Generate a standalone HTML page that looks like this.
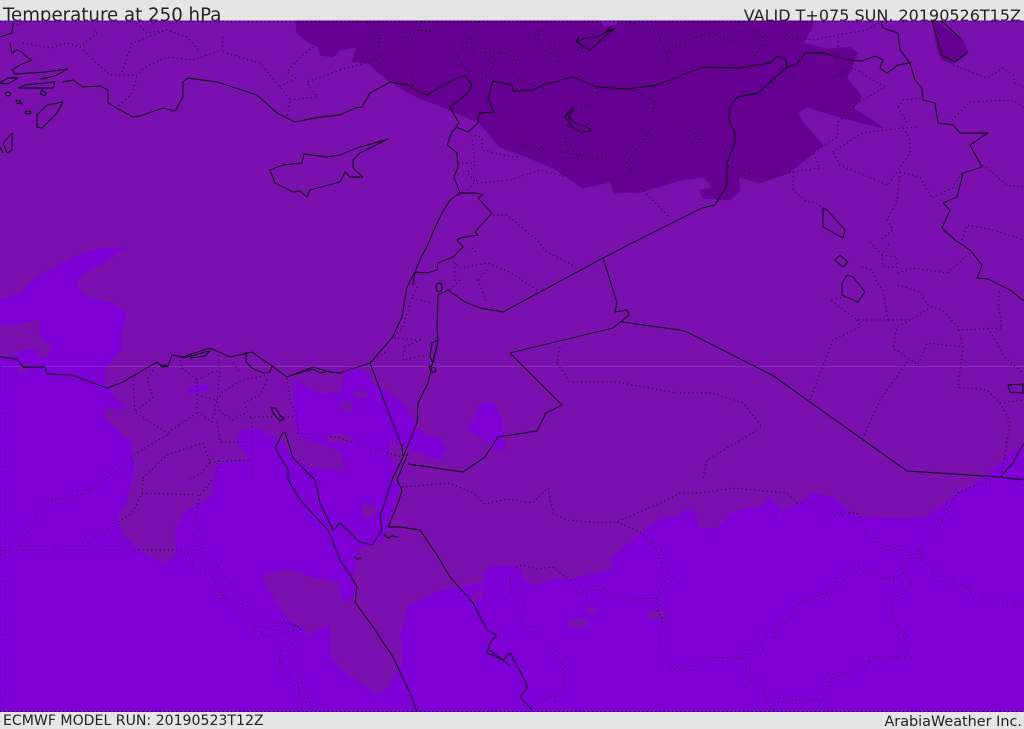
<!DOCTYPE html>
<html><head><meta charset="utf-8"><title>Temperature at 250 hPa</title>
<style>
html,body{margin:0;padding:0;background:#e5e5e5}
svg{display:block}
text{font-family:"DejaVu Sans","Liberation Sans",sans-serif;fill:#222}
</style></head><body>
<svg width="1024" height="729" viewBox="0 0 1024 729" xmlns="http://www.w3.org/2000/svg">
<rect width="1024" height="729" fill="#e5e5e5"/>
<text x="3" y="21" font-size="18.2">Temperature at 250 hPa</text>
<text x="1021" y="21" font-size="16" text-anchor="end">VALID T+075 SUN, 20190526T15Z</text>
<text x="3" y="725" font-size="14.1">ECMWF MODEL RUN: 20190523T12Z</text>
<text x="1022" y="726" font-size="14.4" text-anchor="end">ArabiaWeather Inc.</text>
<rect x="0" y="21" width="1024" height="691" fill="#7f00d7"/>
<!-- mid temperature band -->
<g fill="#7a11ae" stroke="#7a11ae" stroke-linejoin="round" stroke-width="1">
<path d="M0 298Q12 296 20 292L33 278L63 262Q80 251 100 248L127 247L110 260L87 273Q76 281 78 287L88 297L113 303Q125 309 128 318L123 330L123 348L107 367L104 377L113 395L125 405L120 410L107 407L104 415L113 425L132 443L135 470L132 480L127 503L118 517Q120 528 125 535L143 552L162 562L175 557L175 527L187 510L212 495L212 480L217 463L250 460L235 442L243 428L260 428L280 440L290 453L308 467L333 468L345 473L340 452L320 445L300 438L293 420L293 378L320 393L340 392L345 367L353 367L368 372L373 382L385 390L400 400L412 417L420 430L427 435L440 437L448 448L440 460L430 458L407 448L390 442L390 457L397 467L390 480L400 480L400 490L388 527L383 543L360 548L357 563L353 577L357 595L345 603L340 593L338 583L313 578L287 569L263 577L270 590L287 617L310 634L330 623L332 657L340 667L353 678L377 693L387 688L402 662L400 633L408 605L440 590L478 583L483 587L483 570L493 565L520 565L523 578L537 585L553 578L573 578L613 568L610 558L640 533L660 518L680 515L687 508L695 512L700 528L717 528L730 513L747 508L763 505L768 497L777 502L783 509L795 505L813 492L833 497L857 515L900 518L927 515L957 493L983 478L1007 455L1024 443L1024 21L0 21Z"/>
<path d="M0 326L20 325L40 320L39 330L40 337L52 347L48 354L40 357L37 348L20 350L10 358L0 356Z"/>
<path d="M18 371L22 365L29 363L26 370L20 375Z"/>
<path d="M362 503L377 508L375 514L368 519L364 515Z"/>
<path d="M353 394Q361 388 366 393L369 397L357 397Z"/>
<ellipse cx="347" cy="406" rx="6" ry="5"/>
<path d="M327 436L340 434L355 438L345 443L328 440Z"/>
<path d="M473 596L480 590L482 596L476 601L471 601Z"/>
<ellipse cx="592" cy="610" rx="4" ry="4"/>
<ellipse cx="578" cy="623" rx="11" ry="4"/>
<ellipse cx="657" cy="615" rx="9" ry="4"/>
<rect x="778" y="515" width="2" height="3"/>
</g>
<!-- warm pockets inside mid band -->
<g fill="#7f00d7" stroke="#7f00d7">
<path d="M187 390L195 386L208 385L206 391L192 394Z"/>
<path d="M482 403L493 402L500 417L503 430L505 448L497 451L487 440L468 430L475 417Z"/>
</g>
<!-- cold patches -->
<g fill="#660093" stroke="#660093" stroke-linejoin="round">
<path d="M296 21L297 33L310 43L318 47L320 55L333 57L340 50L357 47L352 62L368 63L390 82L417 97L450 110L480 123L500 147L530 158L553 168L583 188L610 182L615 193L640 192L680 180L703 177L713 188L700 190L703 198L730 200L740 190L738 177L760 183L790 172L823 145L803 123L798 113L807 107L840 117L883 128L853 108L862 97L847 78L858 53L850 47L827 49L803 43L812 27L813 21Z"/>
<path d="M932 21L937 47L942 60L953 63L968 52L962 40L943 27L942 21Z"/>
</g>
<path d="M600 21L604 26L616 25L618 21Z M900 21L904 25L910 24L911 21Z" fill="#7a11ae"/>
<!-- faint seam -->
<rect x="0" y="366" width="1024" height="1" fill="#fff" opacity=".13"/>
<!-- dotted boundaries -->
<path fill="none" stroke="#000" stroke-width=".9" stroke-dasharray="1 3.2" d="
M23 43L50 48L67 43L80 47L97 33L92 27
M80 47L93 60L110 75L137 75L145 67L167 57L193 60L222 50L223 37
M122 72L132 43L167 30L187 37L200 52
M137 77L132 93L117 108
M223 52L260 63L280 87L290 100L287 118
M280 87L295 78L287 72L300 57L313 47
M290 100L317 97L307 82L340 70
M137 23L147 33L167 30
M13 25L30 22
M340 70L365 63L383 55L400 50L412 70L413 85
M367 22L380 37L378 45L383 55
M400 50L402 38L420 30L440 33L442 22
M422 22L420 30
M478 22L478 33L458 50L457 57L467 70L488 75
M472 43L473 52L500 53L517 57L543 50L557 55L557 63L565 78
M500 53L493 65L488 75
M557 55L583 48L533 38L547 25
M507 72L537 88
M597 88L597 100L585 108L573 108
M567 133L565 143L578 155
M500 107L503 125L517 135L522 147L517 157
M522 147L547 150L578 155L627 162L648 135L655 102L633 90
M655 102L680 122
M578 155L578 165L565 177L540 170L510 180L477 183L467 173L475 165L472 137
M475 135L482 138L482 150L513 157
M458 163L473 163
M477 180L467 190
M627 162L640 187L670 218
M493 215L507 215L537 240L547 252L578 268
M658 33L673 72 M665 53L680 43 M630 22L658 33
M680 42L713 33L738 45L763 37L797 37L813 40L837 35L867 30L880 22
M718 33L722 23 M738 22L763 37 M763 45L753 57
M838 37L838 55
M787 68L797 80L812 87L837 75L853 68L885 87L858 103L838 122L837 137L813 152L820 168L793 172L770 177L727 166
M683 125L703 143L733 145
M793 172L793 190L807 202L815 202L823 208
M833 152L862 133L903 128L918 127
M903 128L910 140L910 153L888 185L840 165L833 152
M900 172L920 177L932 198L952 188L963 172
M900 172L897 200L887 220L893 230L880 240
M898 107L903 100L922 98 M898 107L907 123
M952 120L970 102L1013 100L1023 107
M953 65L987 78L1003 68L1013 75L1015 83L1023 87
M980 162L1007 185L1023 187
M962 240L967 225L993 230L1024 240
M870 242L882 255L890 242
M882 255L883 267L897 267L897 257L882 255
M862 267L872 270L877 283L883 290L888 320L857 320L830 300L847 297
M898 273L913 268L947 273L970 253
M898 285L920 292L928 305L942 310L958 327L963 347L958 387L987 390L1000 403L1010 422L1002 473
M888 320L910 320L930 308
M910 320L897 327L893 348L918 365L927 343L963 347
M907 362L880 400L862 440
M857 320L860 327L833 340L810 400
M958 330L1002 328L998 303L1000 290
M988 328L1005 357L1023 373
M1000 403L1023 400
M680 393L712 393L743 403L762 427L707 460L703 478
M560 347L557 363L570 382L617 382L677 393
M537 290L510 272L487 263L460 268L452 260
M478 280L487 270 M478 280L487 303
M460 280L450 290 M455 263L455 283
M472 248L477 253
M417 287L412 298L433 303
M412 298L403 327L393 338L420 340L405 347L403 360L427 355
M385 352L370 362
M297 433L340 438L355 443L402 457
M133 380L135 412L167 433L198 412
M157 363L147 380L153 397L135 412
M180 360L182 368L197 380L197 410
M197 380L213 372L220 370
M218 355L220 370L217 400
M197 395L217 400L222 392L243 380L267 375
M267 380L260 395L245 402L247 412L233 420L220 412L217 402
M198 412L212 422L217 400
M233 363L240 373
M250 417L297 417L298 433
M287 378L290 400L297 417
M252 418L252 480
M217 422L220 442L252 442
M167 435L133 455L107 478L87 493L42 503L18 547
M143 478L167 455L203 443L210 462L202 473L187 480
M210 462L250 460
M217 463L217 480
M143 480L142 493L132 513L87 543
M142 493L200 495L212 480
M200 495L195 517L202 540L202 552L220 568L233 587L263 618L300 627L303 640L288 657L302 680L313 712
M188 552L193 568L213 578L222 595L253 628L267 637L297 630L280 653L280 670L298 683L302 710
M222 593L233 587
M253 627L270 628L287 622L300 627
M402 487L427 485L450 483L473 493L485 504L507 499L532 503L548 488L553 513L567 520L600 523L617 522L673 497L680 493L700 493L733 488L787 493L797 503L818 503L823 513L857 513L870 537L877 542L907 552L910 558L923 558L933 572L973 592L1000 603L1024 607
M617 522L640 532L653 542L660 560L675 577L657 598L623 600L603 588L580 595L572 582L553 567L537 569L522 565L502 573
M510 573L512 597L525 605L520 617L525 630L540 633L557 660L563 662L562 695L547 698L530 707
M657 598L657 610L663 620L660 640L663 668L680 670L697 665L708 657L737 658L763 650L763 637L775 637L777 623L787 622L800 603L827 592L837 578L865 567L883 579L897 579L903 573L913 585L892 602L890 617L903 633L908 657L875 657L857 672L832 678L823 700L787 700L780 698L773 710
M737 658L750 663L750 682L762 687L767 703L773 710
M990 480L957 493L937 530L918 550L923 558
M910 558L902 568L903 573
M0 550L202 550
M0 366L0 712
M0 711.5L1024 711.5
M0 21.500L1024 21.500"/>
<!-- coasts and national borders -->
<path fill="none" stroke="#000" stroke-width=".9" stroke-linejoin="round" d="
M13 23L12 33L0 37 M10 43L12 53L17 50L22 52L28 58L32 60L20 65L12 70L15 74L45 72L68 69L55 76L40 79
M18 88L25 85L45 83L55 82L53 88L30 88Z
M0 83L8 78L18 78L8 84Z
M8 92a2.500 2 0 1 0 .1 0Z M16 100l4 1l2 3l-5-1Z M28 111a3 1.500 0 1 0 .1 0Z
M42 90L46 93L45 96L40 94Z
M63 82L73 80L83 87L100 86L108 90L108 103L120 110L133 117L140 116L163 108L175 111L183 97L183 82L188 78L217 82L257 95L277 113L295 122L320 117L340 115L355 108L362 107L370 93L390 82L407 85L427 95L440 87L457 78L465 76L472 85L468 93L450 107L459 123L456 127L468 132L478 123L479 113L494 112L488 98L493 81L512 85L513 91L533 90L543 85L573 77L597 87L627 89L657 85L680 76L703 67L740 68L770 63L778 56L786 60L787 67L797 64L805 53L823 53L847 60L862 61L875 56L883 60L880 68L887 73L898 65L910 63
M881 21L883 28L898 33L900 50L910 63L915 80L922 88L923 100L935 103L938 123L953 125L960 133L988 133L970 145L982 167L963 173L957 197L943 203L950 210L942 228L955 240L970 250L982 265L977 278L988 279L1010 290L1024 301
M787 67L758 93L737 97L730 107L729 120L735 133L735 143L727 163L727 185L715 205L702 208L680 219L638 240L603 258L503 312L480 308L465 302L448 290L438 295L437 327L438 340L432 365L428 383L418 403L417 423L403 457
M603 258L617 303L615 312L627 310L629 315L613 328L510 353L562 405L546 413L537 431L498 437L485 457L463 472L408 464
M622 322L680 330L687 332L772 375L907 471L1000 477L1024 480
M1000 477L1013 463L1024 443
M457 127L452 132L447 145L457 153L458 167L454 177L460 193L450 200L442 213L433 232L430 240L420 260L415 272L407 287L402 317L392 338L370 363L340 373
M460 193L477 193L483 195L478 198L492 213L475 232L478 235L460 238L457 240L463 247L453 257L438 263L437 270L427 273L415 272L413 285
M370 363L385 403L402 447L403 457
M408 453L397 480L402 490L398 503L388 527
M403 457L392 480L380 517L382 530L372 545L360 542L340 523L333 530L320 503L315 480L293 458L285 432
M283 432L275 448L288 470L288 480L300 500L328 530L333 542L337 552L340 560L350 575L357 587L355 602L373 627L393 657L410 693L417 712
M388 527L400 527L420 530L437 555L450 577L473 603L487 630L497 635L490 643L487 653L503 660L510 653L515 662L525 680L527 688L520 697L532 710
M384 534L388 538L392 536L398 537 M354 557L358 559L361 558
M270 170L275 183L293 192L300 191L307 197L310 190L340 182L345 172L350 177L363 177L353 168L353 160L360 153L388 139L357 148L340 155L327 157L304 154L302 163L283 165L270 170Z
M63 102L47 105L37 115L37 127L42 128L57 113Z
M12 133L3 143L7 153L12 150Z M0 147L3 153
M0 357L17 359L23 367L45 367L47 374L72 375L93 383L107 388L123 382L157 362L163 367L168 366L172 355L182 357L210 348L230 357L248 353L252 352L272 366L287 377L313 367L330 372L340 373
M182 358L195 355L205 352L210 351L205 356L190 358
M160 366L167 365 M246 352L246 362L252 368L263 373L270 372L272 366
M289 376L300 373L313 369L320 373L330 371
M438 340L432 343L430 357L433 363L436 350Z M429 366L431 372L436 372L435 368Z
M439 283a3 4.500 0 1 0 .1 0Z
M573 107L565 117L572 127L582 133L592 130L585 126L575 123L568 117L573 110Z
M577 42L590 50L615 28L597 37L585 38Z
M835 260L840 255L848 262L843 267Z
M847 275L842 283L842 295L858 302L865 292L853 277Z
M823 208L823 227L843 238L845 230L827 210Z
M1008 385L1023 384L1023 393L1010 392Z
M932 21L942 55L955 62L968 52 M942 21L962 40
M271 408l4 0l5 7l4 4l-4 2l-7-8Z
M490 650L500 658L510 666 M384 535l5 3
M576 42l3-5 M606 32l5-5"/>
</svg>
</body></html>
